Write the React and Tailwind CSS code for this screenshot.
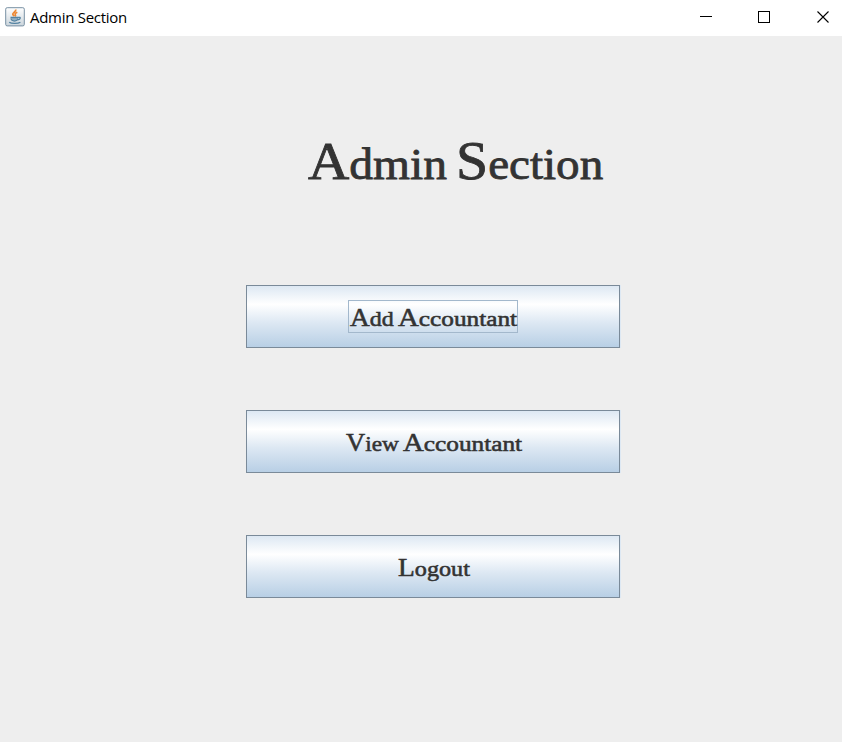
function Word({ children, className }) {
  return <span className={`inline-block origin-left whitespace-nowrap text-left ${className}`}>{children}</span>;
}

function JavaIcon() {
  return (
    <svg width="20" height="20" viewBox="0 0 20 20" fill="none" aria-hidden="true">
      <defs>
        <linearGradient id="tile" x1="0" y1="0" x2="0" y2="1">
          <stop offset="0" stopColor="#ffffff" />
          <stop offset="1" stopColor="#cbd5dc" />
        </linearGradient>
      </defs>
      <rect x="0.7" y="0.7" width="18.6" height="18.2" rx="1.5" fill="url(#tile)" stroke="#7890a3" />
      <path d="M10.7 2.5c.8 2-3.4 3-2.9 4.8.2.8 1 1.2 1.2 2M12.3 5.2c-1.8.8-2.6 1.5-2 2.4.4.6.5 1-.2 1.7" stroke="#ed8732" strokeWidth="1.7" />
      <path d="M5.5 10.5h7.7M6 11.5c.3 2.2 1.4 2.5 3.5 2.5s3.1-.3 3.4-2.5M13.2 10.4c3-.7 2.5 2-.3 2.4M4.2 15.3c2 1.5 9 1.5 11.2 0" stroke="#5382a1" strokeWidth="1.3" />
      <path d="M6.5 12h6" stroke="#6f94af" strokeWidth="1.3" />
    </svg>
  );
}

function MenuButton({ children, focused }) {
  return (
    <button className="flex h-[63px] w-[374px] items-center justify-center border border-[#7a8a99] bg-[linear-gradient(to_bottom,#dde8f3_0%,#ffffff_30%,#dde8f3_60%,#b8cfe5_100%)] p-0 shadow-[1px_0_0_#dde8f3]">
      <span
        className={`flex h-[33px] items-baseline border pt-[2px] text-[22px] leading-[30px] [-webkit-text-stroke:0.55px_#333] ${
          focused ? "w-[170px] border-[#a3b8cc] pl-px" : "border-transparent"
        }`}
      >
        {children}
      </span>
    </button>
  );
}

export default function App() {
  return (
    <div className="flex h-[742px] w-[842px] flex-col overflow-hidden bg-[#eeeeee] font-['Liberation_Serif',serif] text-[#333]">
      <header className="flex h-[36px] shrink-0 items-center bg-white pl-[5px] font-['Open_Sans',sans-serif] text-black">
        <div className="mt-[-3px]"><JavaIcon /></div>
        <span className="mt-[-2px] ml-[5px] grow whitespace-nowrap text-[15px] leading-5 tracking-[-0.28px]">Admin Section</span>
        <svg width="142" height="36" viewBox="0 0 142 36" fill="none" stroke="black" shapeRendering="crispEdges" aria-hidden="true">
          <path d="M0 16.5h12M58.5 11.5h11v11h-11z" />
          <path d="M117.5 11.5l11 11M128.5 11.5l-11 11" shapeRendering="auto" strokeWidth="1.1" />
        </svg>
      </header>
      <main className="flex flex-col items-start pl-[246px] pt-[94px]">
        <h1 className="ml-[62px] flex h-[60px] items-baseline pt-px text-[44px] leading-[60px] [-webkit-text-stroke:0.8px_#333]">
          <Word className="w-[148px] scale-x-[1.08] first-letter:text-[53px]">Admin </Word>
          <Word className="scale-x-[1.07] first-letter:text-[54px]">Section</Word>
        </h1>
        <div className="mt-[95px] flex flex-col gap-[62px]">
          <MenuButton focused>
            <Word className="w-[48px] shrink-0 scale-x-[1.09] first-letter:text-[25px]">Add </Word>
            <Word className="w-[119px] shrink-0 scale-x-[1.15] first-letter:text-[25px]">Accountant</Word>
          </MenuButton>
          <MenuButton>
            <Word className="w-[57px] scale-x-[1.06] first-letter:text-[25px]">View </Word>
            <Word className="w-[118px] scale-x-[1.15] first-letter:text-[25px]">Accountant</Word>
          </MenuButton>
          <MenuButton>
            <Word className="w-[71px] scale-x-[1.1] first-letter:text-[25px]">Logout</Word>
          </MenuButton>
        </div>
      </main>
    </div>
  );
}
